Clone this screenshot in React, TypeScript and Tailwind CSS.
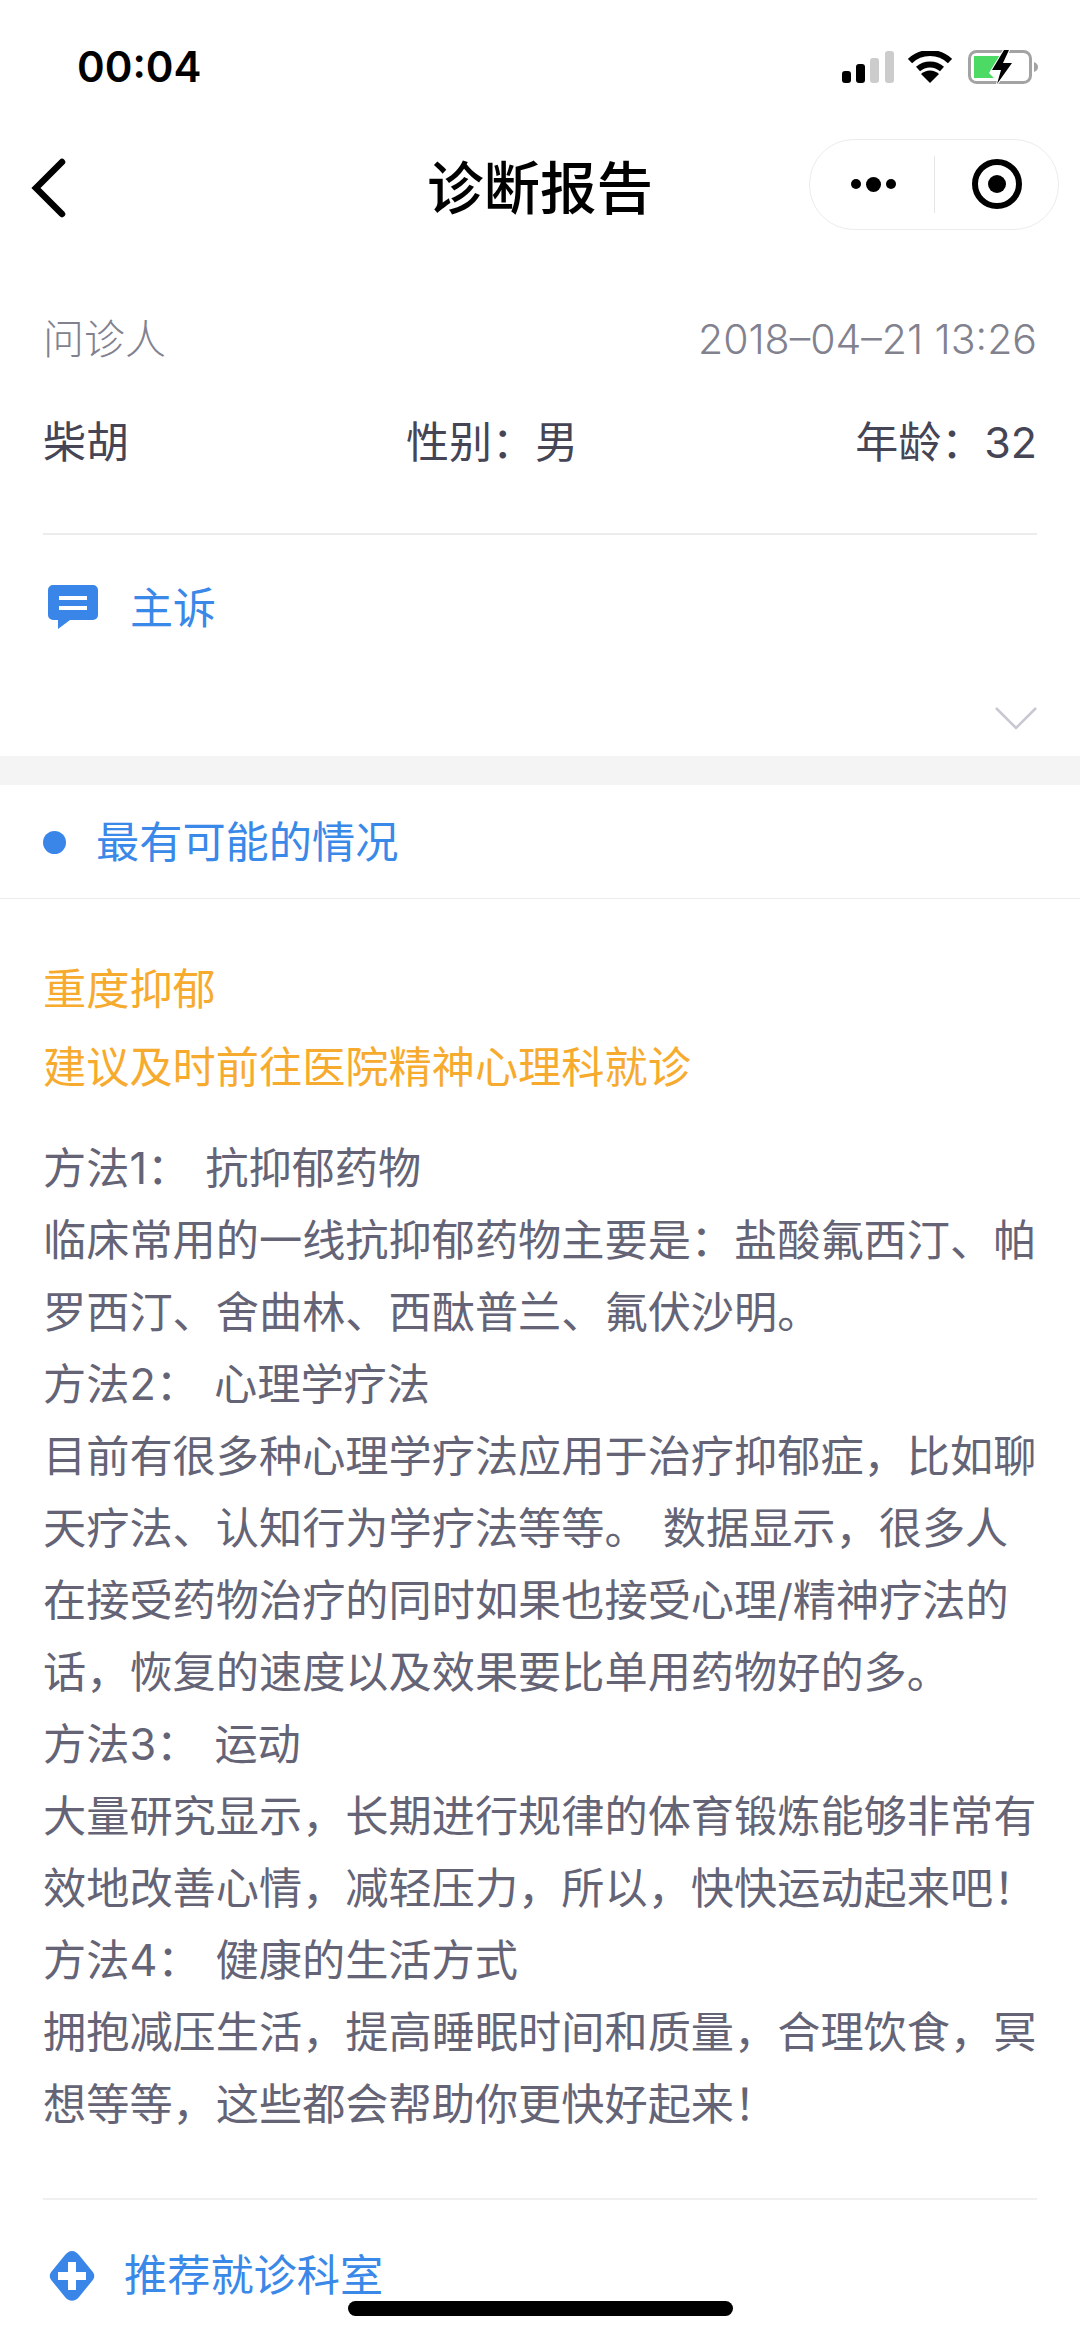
import React from "react";

const font = { fontFamily: '"Inter","Noto Sans CJK SC",sans-serif' };

const bodyLines = [
  "方法1： 抗抑郁药物",
  "临床常用的一线抗抑郁药物主要是：盐酸氟西汀、帕",
  "罗西汀、舍曲林、西酞普兰、氟伏沙明。",
  "方法2： 心理学疗法",
  "目前有很多种心理学疗法应用于治疗抑郁症，比如聊",
  "天疗法、认知行为学疗法等等。 数据显示，很多人",
  "在接受药物治疗的同时如果也接受心理/精神疗法的",
  "话，恢复的速度以及效果要比单用药物好的多。",
  "方法3： 运动",
  "大量研究显示，长期进行规律的体育锻炼能够非常有",
  "效地改善心情，减轻压力，所以，快快运动起来吧！",
  "方法4： 健康的生活方式",
  "拥抱减压生活，提高睡眠时间和质量，合理饮食，冥",
  "想等等，这些都会帮助你更快好起来！",
];

function StatusIcons() {
  return (
    <div className="flex items-center">
      <svg width="52" height="32" viewBox="0 0 52 32" className="mr-[14px]">
        <rect x="0" y="20" width="9" height="12" rx="3" fill="#000" />
        <rect x="14" y="13" width="9" height="19" rx="3" fill="#000" />
        <rect x="28" y="7" width="9" height="25" rx="3" fill="#ccc" />
        <rect x="43" y="0" width="9" height="32" rx="3" fill="#ccc" />
      </svg>
      <svg width="44" height="32" viewBox="0 0 44 32" className="mr-[16px]">
        <path d="M2 10 A29 29 0 0 1 42 10" fill="none" stroke="#000" strokeWidth="6" />
        <path d="M10 18 A18 18 0 0 1 34 18" fill="none" stroke="#000" strokeWidth="6" />
        <path d="M22 32 L13 23 A13 13 0 0 1 31 23 Z" fill="#000" />
      </svg>
      <svg width="70" height="34" viewBox="0 0 70 34">
        <rect x="1.5" y="1.5" width="61" height="31" rx="7" fill="none" stroke="#a3a3a3" strokeWidth="3" />
        <path d="M6 6 H32 L21 23 H6 Z M6 23 H21 L26 28 H6 Z" fill="#4cd964" />
        <path d="M66 12 C69 13 70 15 70 17 C70 19 69 21 66 22 Z" fill="#a3a3a3" />
        <path d="M36 0 L24 20 H33 L29 34 L44 13 H35 L41 0 Z" fill="#000" stroke="#fff" strokeWidth="2" paintOrder="stroke" />
      </svg>
    </div>
  );
}

export default function App() {
  return (
    <div className="relative h-[2338px] w-[1080px] overflow-hidden bg-white" style={font}>
      <div className="flex h-[118px] items-start justify-between pl-[77px] pr-[42px] pt-[42px]">
        <span className="text-[42px] leading-[50px] font-semibold text-black">00:04</span>
        <div className="pt-[8px]">
          <StatusIcons />
        </div>
      </div>

      <div className="relative flex h-[132px] items-center justify-between pl-[30px] pr-[21px]">
        <svg width="38" height="60" viewBox="0 0 38 60" className="mt-[8px]">
          <path d="M32 4 L6 30 L32 56" fill="none" stroke="#000" strokeWidth="6.5" strokeLinecap="round" strokeLinejoin="miter" />
        </svg>
        <div className="absolute left-0 right-0 top-[36px] text-center text-[56.5px] leading-[70px] font-medium text-black">
          诊断报告
        </div>
        <div className="flex h-[91px] w-[250px] items-center rounded-[45px] border border-[#ececec] bg-white">
          <div className="flex h-[57px] w-[125px] items-center justify-center gap-[5px] border-r border-[#e5e5e5] pl-[2px]">
            <span className="h-[10px] w-[10px] rounded-full bg-black" />
            <span className="h-[15px] w-[15px] rounded-full bg-black" />
            <span className="h-[10px] w-[10px] rounded-full bg-black" />
          </div>
          <div className="flex flex-1 items-center justify-center">
            <span className="flex h-[50px] w-[50px] items-center justify-center rounded-full border-[6px] border-black">
              <span className="h-[18px] w-[18px] rounded-full bg-black" />
            </span>
          </div>
        </div>
      </div>

      <div className="px-[43px] pt-[36px]">
        <div className="flex h-[100px] items-center justify-between pt-[8px] text-[41px] font-light text-[#82828f]">
          <span>问诊人</span>
          <span>2018–04–21 13:26</span>
        </div>
        <div className="mt-[6px] flex h-[100px] items-center justify-between text-[43px] font-normal text-[#454556]">
          <span>柴胡</span>
          <span>性别：男</span>
          <span>年龄：32</span>
        </div>
        <div className="mt-[41px] h-[2px] bg-[#ececec]" />
        <div className="flex h-[146px] items-center gap-[32px] pl-[5px]">
          <svg width="50" height="46" viewBox="0 0 50 46">
            <path d="M5 0 H45 A5 5 0 0 1 50 5 V30 A5 5 0 0 1 45 35 H22 L10 44 V35 H5 A5 5 0 0 1 0 30 V5 A5 5 0 0 1 5 0 Z" fill="#3a86e8" />
            <rect x="11" y="11" width="28" height="4" fill="#fff" />
            <rect x="11" y="21" width="28" height="4" fill="#fff" />
          </svg>
          <span className="text-[43px] leading-none font-normal text-[#3a88e8]">主诉</span>
        </div>
        <div className="flex h-[75px] justify-end pt-[25px]">
          <svg width="42" height="24" viewBox="0 0 42 24">
            <path d="M1 2 L21 22 L41 2" fill="none" stroke="#c8c8d2" strokeWidth="2.5" />
          </svg>
        </div>
      </div>

      <div className="h-[29px] bg-[#f4f4f4]" />

      <div className="flex h-[114px] items-center gap-[30px] border-b border-[#ececec] pt-[2px] pl-[43px]">
        <span className="h-[23px] w-[23px] rounded-full bg-[#3a86e8]" />
        <span className="text-[43.2px] leading-none font-normal text-[#3a88e8]">最有可能的情况</span>
      </div>

      <div className="px-[43px] pt-[51px]">
        <div className="text-[43.2px] leading-[78px] font-normal text-[#f7ab2e]">
          <div>重度抑郁</div>
          <div>建议及时前往医院精神心理科就诊</div>
        </div>
        <div className="mt-[26px] text-[43.2px] leading-[72px] font-normal [word-spacing:3px] whitespace-pre text-[#646476]">
          {bodyLines.map((l) => (
            <div key={l}>{l}</div>
          ))}
        </div>
      </div>

      <div className="mx-[43px] mt-[58px] h-[2px] bg-[#f0f0f0]" />

      <div className="flex h-[152px] items-center gap-[29px] pl-[49px]">
        <svg width="46" height="50" viewBox="0 0 46 50">
          <path d="M23 0 C26 0 28 2 30 4 L43 20 C46 23 46 27 43 30 L30 46 C26 51 20 51 16 46 L3 30 C0 27 0 23 3 20 L16 4 C18 2 20 0 23 0 Z" fill="#3a86e8" />
          <path d="M19 11 H27 V21 H37 V29 H27 V39 H19 V29 H9 V21 H19 Z" fill="#fff" />
        </svg>
        <span className="text-[43.2px] leading-none font-normal text-[#3a88e8]">推荐就诊科室</span>
      </div>

      <div className="absolute bottom-[22px] left-[348px] h-[15px] w-[385px] rounded-full bg-black" />
    </div>
  );
}
